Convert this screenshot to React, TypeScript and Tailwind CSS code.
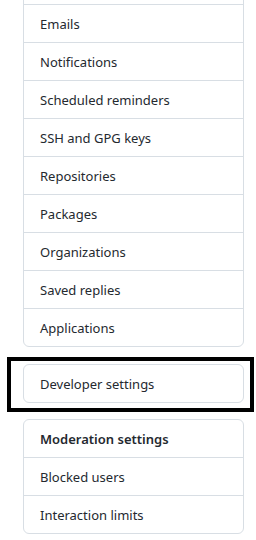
const mainItems = [
  "",
  "Emails",
  "Notifications",
  "Scheduled reminders",
  "SSH and GPG keys",
  "Repositories",
  "Packages",
  "Organizations",
  "Saved replies",
  "Applications",
]

const moderationItems = ["Blocked users", "Interaction limits"]

function NavRow({ label, first, bold }: { label: string; first?: boolean; bold?: boolean }) {
  return (
    <div
      className={`flex items-center pl-4 pt-[2px] text-[13px] text-[#24292f] ${
        first ? "h-[37px]" : "h-[38px] border-t border-[#d8dee4]"
      } ${bold ? "font-semibold" : ""}`}
    >
      {label}
    </div>
  )
}

export default function App() {
  return (
    <div
      className="w-[256px] h-[540px] overflow-hidden bg-white"
      style={{ fontFamily: '"Noto Sans", "Segoe UI", sans-serif' }}
    >
      {/* top of the list is scrolled out of view */}
      <div className="-mt-[34px] ml-[23px] w-[221px] rounded-md border border-[#d8dee4]">
        {mainItems.map((item, i) => (
          <NavRow key={i} label={item} first={i === 0} />
        ))}
      </div>

      {/* highlight box */}
      <div className="mt-[10px] ml-[7px] w-[247px] border-4 border-black pt-[3px] pb-[5px] pl-[12px]">
        <div className="w-[221px] rounded-md border border-[#d8dee4]">
          <NavRow label="Developer settings" first />
        </div>
      </div>

      <div className="mt-[7px] ml-[23px] w-[221px] rounded-md border border-[#d8dee4]">
        <NavRow label="Moderation settings" first bold />
        {moderationItems.map((item) => (
          <NavRow key={item} label={item} />
        ))}
      </div>
    </div>
  )
}
